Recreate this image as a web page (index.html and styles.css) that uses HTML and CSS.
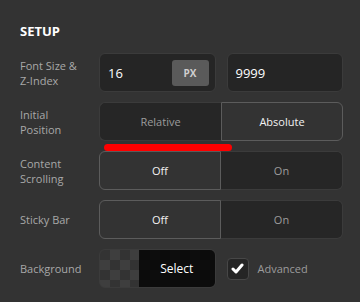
FILE: index.html
```html
<!DOCTYPE html>
<html>
<head>
    <title>Setup</title>
    <link rel="stylesheet" href="styles.css">
</head>
<body>
    <div class="setup-panel">
        <div class="setup-title">SETUP</div>

        <div class="setup-row">
            <div class="setup-label">Font Size &amp;<br>Z-Index</div>
            <div class="setup-pair">
                <div class="setup-input">
                    <span>16</span>
                    <div class="unit-btn">PX</div>
                </div>
                <div class="setup-input">
                    <span>9999</span>
                </div>
            </div>
        </div>

        <div class="setup-row">
            <div class="setup-label">Initial<br>Position</div>
            <div class="segmented">
                <div class="seg-option">Relative</div>
                <div class="seg-option active">Absolute</div>
            </div>
            <div class="red-mark"></div>
        </div>

        <div class="setup-row">
            <div class="setup-label">Content<br>Scrolling</div>
            <div class="segmented">
                <div class="seg-option active">Off</div>
                <div class="seg-option">On</div>
            </div>
        </div>

        <div class="setup-row">
            <div class="setup-label">Sticky Bar</div>
            <div class="segmented">
                <div class="seg-option active">Off</div>
                <div class="seg-option">On</div>
            </div>
        </div>

        <div class="setup-row">
            <div class="setup-label">Background</div>
            <div class="setup-pair">
                <div class="color-select">
                    <div class="color-preview">Select</div>
                </div>
                <label class="check-field">
                    <span class="check-box">
                        <svg width="13" height="11" viewBox="0 0 13 11">
                            <polyline points="2,6 5,9 11,2" fill="none" stroke="#ffffff" stroke-width="3" stroke-linecap="round" stroke-linejoin="round"/>
                        </svg>
                    </span>
                    <span>Advanced</span>
                </label>
            </div>
        </div>
    </div>
</body>
</html>
```

FILE: styles.css
```css
body {
    font-family: 'Open Sans', 'Noto Sans', 'DejaVu Sans', sans-serif;
    background-color: #333333;
    color: #aaaaaa;
    margin: 0;
    padding: 23px 17px 0 20px;
    font-size: 11px;
}

.setup-title {
    font-size: 13px;
    font-weight: 700;
    line-height: 16px;
    color: #ffffff;
    margin-bottom: 14px;
}

.setup-row {
    display: grid;
    grid-template-columns: 79px 1fr;
    align-items: center;
    height: 39px;
    margin-bottom: 10px;
    position: relative;
}

.setup-label {
    line-height: 15px;
    color: #a8a8a8;
}

.setup-pair {
    display: grid;
    grid-template-columns: 1fr 1fr;
    gap: 11px;
    height: 100%;
}

.setup-input {
    display: flex;
    align-items: center;
    justify-content: space-between;
    background-color: #252525;
    border: 1px solid #3b3b3b;
    border-radius: 6px;
    padding: 0 6px 0 8px;
    font-size: 13px;
    color: #ffffff;
}

.unit-btn {
    width: 37px;
    height: 26px;
    border-radius: 3px;
    background-color: #5a5a5a;
    color: #cfcfcf;
    font-size: 10px;
    font-weight: 700;
    display: flex;
    align-items: center;
    justify-content: center;
}

.segmented {
    display: grid;
    grid-template-columns: 1fr 1fr;
    height: 100%;
    box-sizing: border-box;
}

.seg-option {
    display: flex;
    align-items: center;
    justify-content: center;
    background-color: #262626;
    border: 1px solid #3b3b3b;
    color: #9c9c9c;
}

.seg-option:first-child {
    border-radius: 6px 0 0 6px;
    border-right: none;
}

.seg-option:last-child {
    border-radius: 0 6px 6px 0;
    border-left: none;
}

.seg-option.active {
    background-color: #333333;
    border: 1px solid #5c5c5c;
    color: #f2f2f2;
}

/* annotation stroke under the position switch */
.red-mark {
    position: absolute;
    left: 84px;
    top: 42px;
    width: 128px;
    height: 7px;
    border-radius: 4px;
    background-color: #ff0000;
}

.color-select {
    border: 1px solid #3b3b3b;
    border-radius: 6px;
    overflow: hidden;
    background-color: #333333;
    background-image:
        linear-gradient(45deg, #3e3e3e 25%, transparent 25%, transparent 75%, #3e3e3e 75%),
        linear-gradient(45deg, #3e3e3e 25%, transparent 25%, transparent 75%, #3e3e3e 75%);
    background-size: 20px 20px;
    background-position: 0 0, 10px 10px;
}

.color-preview {
    height: 100%;
    margin-left: 39px;
    display: flex;
    align-items: center;
    justify-content: center;
    background-color: rgba(0, 0, 0, 0.78);
    color: #ffffff;
    font-size: 12px;
}

.check-field {
    display: flex;
    align-items: center;
    gap: 9px;
    color: #9c9c9c;
}

.check-box {
    width: 20px;
    height: 20px;
    border: 1px solid #474747;
    border-radius: 4px;
    background-color: #252525;
    display: flex;
    align-items: center;
    justify-content: center;
}
```
